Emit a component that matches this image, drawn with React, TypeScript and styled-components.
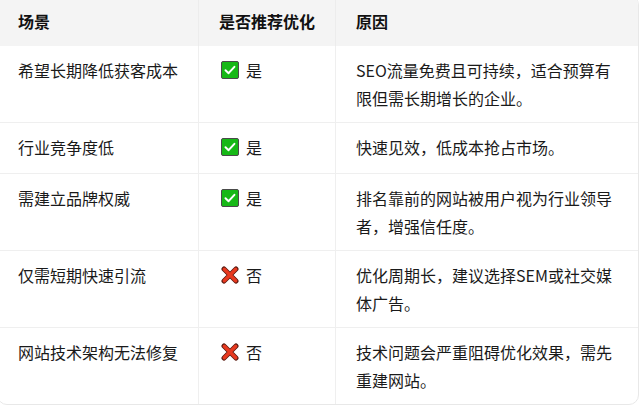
import styled, { createGlobalStyle } from "styled-components";

const GlobalStyle = createGlobalStyle`
  html, body {
    margin: 0;
    padding: 0;
    background: #ffffff;
    overflow: hidden;
  }
  body {
    font-family: "Noto Sans CJK SC", "Noto Sans", sans-serif;
    color: #1a1a1a;
  }
`;

const TableWrap = styled.div`
  width: 640px;
  margin: -5px 0 0 -3px;
  border: 1px solid #e8e8e8;
  border-radius: 10px;
  overflow: hidden;
`;

const Table = styled.table`
  width: 100%;
  table-layout: fixed;
  border-collapse: separate;
  border-spacing: 0;
  font-size: 16px;
  line-height: 28px;
`;

const HeadCell = styled.th`
  background: #f4f4f4;
  text-align: left;
  font-weight: 700;
  padding: 11px 20px;
  color: #111111;
  border-right: 1px solid #ececec;
  &:last-child {
    border-right: none;
  }
`;

const Row = styled.tr`
  &:last-child td {
    border-bottom: none;
  }
`;

const Cell = styled.td`
  vertical-align: top;
  padding: 10px 20px;
  border-right: 1px solid #efefef;
  border-bottom: 1px solid #efefef;
  &:last-child {
    border-right: none;
  }
`;

const Verdict = styled.span`
  display: inline-flex;
  align-items: center;
  gap: 7px;
  padding-left: 2px;
`;

const IconBox = styled.svg`
  flex: none;
  display: block;
`;

const CheckIcon = () => (
  <IconBox width="18" height="18" viewBox="0 0 18 18">
    <rect x="0.5" y="0.5" width="17" height="17" rx="1.5" fill="#16b816" stroke="#4a4a4a" />
    <path d="M4.5 9.3 L7.6 12.2 L13.4 5.8" fill="none" stroke="#ffffff" strokeWidth="2" strokeLinecap="round" strokeLinejoin="round" />
  </IconBox>
);

const CrossIcon = () => (
  <IconBox width="18" height="18" viewBox="0 0 18 18">
    <path d="M3 3 L15 15 M15 3 L3 15" stroke="#5a1a10" strokeWidth="5" strokeLinecap="round" />
    <path d="M3.3 3.3 L14.7 14.7 M14.7 3.3 L3.3 14.7" stroke="#e8391f" strokeWidth="3.4" strokeLinecap="round" />
  </IconBox>
);

interface RowData {
  scene: string;
  recommend: boolean;
  reason: string;
}

const rows: RowData[] = [
  { scene: "希望长期降低获客成本", recommend: true, reason: "SEO流量免费且可持续，适合预算有限但需长期增长的企业。" },
  { scene: "行业竞争度低", recommend: true, reason: "快速见效，低成本抢占市场。" },
  { scene: "需建立品牌权威", recommend: true, reason: "排名靠前的网站被用户视为行业领导者，增强信任度。" },
  { scene: "仅需短期快速引流", recommend: false, reason: "优化周期长，建议选择SEM或社交媒体广告。" },
  { scene: "网站技术架构无法修复", recommend: false, reason: "技术问题会严重阻碍优化效果，需先重建网站。" },
];

export default function App() {
  return (
    <>
      <GlobalStyle />
      <TableWrap>
        <Table>
          <colgroup>
            <col style={{ width: 201 }} />
            <col style={{ width: 137 }} />
            <col />
          </colgroup>
          <thead>
            <tr>
              <HeadCell>场景</HeadCell>
              <HeadCell>是否推荐优化</HeadCell>
              <HeadCell>原因</HeadCell>
            </tr>
          </thead>
          <tbody>
            {rows.map((r) => (
              <Row key={r.scene}>
                <Cell>{r.scene}</Cell>
                <Cell>
                  <Verdict>
                    {r.recommend ? <CheckIcon /> : <CrossIcon />}
                    {r.recommend ? "是" : "否"}
                  </Verdict>
                </Cell>
                <Cell>{r.reason}</Cell>
              </Row>
            ))}
          </tbody>
        </Table>
      </TableWrap>
    </>
  );
}
